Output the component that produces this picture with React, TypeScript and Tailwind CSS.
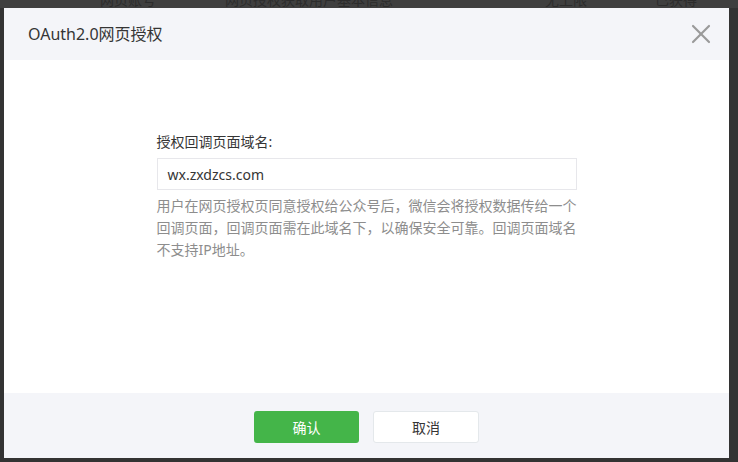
import { X } from "lucide-react";

const FONT = "font-['Noto_Sans','Noto_Sans_CJK_SC',sans-serif]";

function Backdrop() {
  return (
    <div className="absolute inset-0 flex flex-col justify-between bg-[#333333]">
      <div className="flex h-[8px] overflow-hidden bg-[#3f3f3f] text-[14px] leading-[20px] text-[#2c2c2c]">
        <div className="-mt-[10px] flex">
          <span className="ml-[100px] w-[125px]">网页账号</span>
          <span className="w-[320px]">网页授权获取用户基本信息</span>
          <span className="w-[110px]">无上限</span>
          <span>已获得</span>
        </div>
      </div>
      <div className="flex h-[4px] overflow-hidden text-[14px] leading-[20px] text-[#282828]">
        <span className="ml-[100px] mt-[1px]">网页服务</span>
      </div>
    </div>
  );
}

export default function App() {
  return (
    <div className={`relative h-[462px] w-[738px] overflow-hidden ${FONT}`}>
      <Backdrop />
      <div className="absolute left-[4px] top-[8px] flex h-[450px] w-[725px] flex-col bg-white">
        <div className="flex h-[52px] shrink-0 items-center justify-between bg-[#f4f5f9] pl-[24px] pr-[12px]">
          <h3 className="text-[16px] font-normal text-[#353535]">OAuth2.0网页授权</h3>
          <button className="flex size-[32px] items-center justify-center text-[#9a9a9a]">
            <X size={32} strokeWidth={1.6} />
          </button>
        </div>

        <div className="flex flex-1 justify-center pt-[71px]">
          <div className="flex w-[420px] flex-col">
            <label className="text-[14px] leading-[22px] text-[#353535]">授权回调页面域名:</label>
            <div className="mt-[5px] flex h-[32px] items-center border border-[#e7e7eb] px-[10px] text-[14px] text-[#353535]">
              wx.zxdzcs.com
            </div>
            <p className="mt-[5px] whitespace-nowrap text-[14px] leading-[22px] text-[#8d8d8d]">
              用户在网页授权页同意授权给公众号后，微信会将授权数据传给一个
              <br />
              回调页面，回调页面需在此域名下，以确保安全可靠。回调页面域名
              <br />
              不支持IP地址。
            </p>
          </div>
        </div>

        <div className="flex h-[65px] shrink-0 justify-center gap-[14px] bg-[#f4f5f9] pt-[18px]">
          <button className="h-[32px] w-[105px] rounded-[3px] bg-[#44b549] text-[14px] text-white">
            确认
          </button>
          <button className="h-[32px] w-[106px] rounded-[3px] border border-[#e4e8eb] bg-white text-[14px] text-[#353535]">
            取消
          </button>
        </div>
      </div>
    </div>
  );
}
